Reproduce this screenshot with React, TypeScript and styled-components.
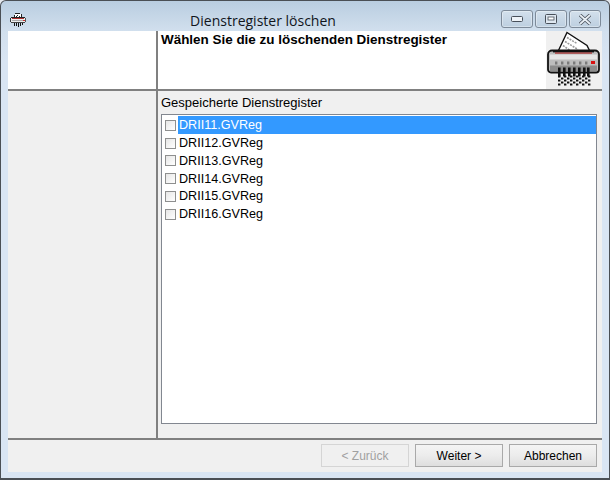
import React from "react";
import styled, { createGlobalStyle } from "styled-components";

const Global = createGlobalStyle`
  html, body { margin: 0; padding: 0; background: #e4e8ee; }
  #root { width: 610px; height: 480px; }
`;

const Frame = styled.div`
  width: 610px;
  height: 480px;
  box-sizing: border-box;
  border: 1px solid #4a4f55;
  border-bottom-width: 2px;
  border-radius: 6px 6px 0 0;
  background: linear-gradient(180deg, #b9cde0 0, #d2e0ee 31px, #d9e5f3 60px, #d9e5f3 100%);
  display: flex;
  flex-direction: column;
  padding: 0 7px 6px;
  overflow: hidden;
  font-family: "Liberation Sans", Arial, sans-serif;
`;

const TitleBar = styled.div`
  height: 30px;
  flex: none;
  display: flex;
  align-items: flex-start;
  margin-right: 1px;
`;

const TitleIcon = styled.div`
  width: 16px;
  height: 15px;
  margin: 11px 0 0 2px;
  flex: none;
`;

const TitleText = styled.div`
  width: 474px;
  margin-top: 10px;
  text-align: center;
  font: 14px/20px "Open Sans", sans-serif;
  color: #10151c;
  flex: none;
  box-sizing: border-box;
`;

const Controls = styled.div`
  display: flex;
  gap: 2px;
  margin-top: 9px;
  margin-left: auto;
`;

const ControlBtn = styled.div`
  width: 32px;
  height: 18px;
  box-sizing: border-box;
  border: 1px solid #7d8a99;
  border-radius: 3px;
  background: linear-gradient(180deg, #d3e0ec, #bdcfe0);
  box-shadow: inset 0 0 0 1px rgba(255, 255, 255, 0.35);
  display: flex;
  align-items: center;
  justify-content: center;
`;

const Client = styled.div`
  flex: 1;
  background: #f0f0f0;
  display: flex;
  flex-direction: column;
  min-height: 0;
`;

const Header = styled.div`
  height: 58px;
  flex: none;
  display: flex;
  background: #fff;
`;

const HeaderLeft = styled.div`
  width: 148px;
  flex: none;
`;

const VRule = styled.div`
  width: 2px;
  flex: none;
  background: #808080;
`;

const HeaderText = styled.div`
  flex: 1;
  padding: 1px 0 0 3px;
  font-size: 13.45px;
  line-height: 16px;
  font-weight: 700;
  color: #000;
`;

const HeaderIcon = styled.div`
  width: 56px;
  flex: none;
  background: #f0f0f0;
`;

const HRule = styled.div`
  height: 2px;
  flex: none;
  background: #808080;
`;

const Body = styled.div`
  flex: 1;
  display: flex;
  min-height: 0;
`;

const Side = styled.div`
  width: 148px;
  flex: none;
`;

const Main = styled.div`
  flex: 1;
  display: flex;
  flex-direction: column;
  padding: 4px 5px 14px 3px;
  min-width: 0;
`;

const ListLabel = styled.div`
  font-size: 13px;
  line-height: 15px;
  height: 19px;
  color: #000;
`;

const ListBox = styled.div`
  flex: 1;
  box-sizing: border-box;
  border: 1px solid #828790;
  background: #fff;
  padding: 1.4px 0 0;
`;

const Row = styled.div`
  height: 17.8px;
  display: flex;
  align-items: center;
  padding-left: 3px;
`;

const Check = styled.div`
  width: 11px;
  height: 11px;
  box-sizing: border-box;
  border: 1px solid #8e8f8f;
  background: linear-gradient(135deg, #e6e6e6, #fff);
  flex: none;
  margin-right: 2px;
`;

const RowLabel = styled.div<{ $selected?: boolean }>`
  flex: 1;
  height: 18px;
  line-height: 18px;
  font-size: 12.6px;
  padding-left: 1px;
  background: ${(p) => (p.$selected ? "#3399ff" : "transparent")};
  color: ${(p) => (p.$selected ? "#fff" : "#000")};
`;

const Footer = styled.div`
  height: 32px;
  flex: none;
  display: flex;
  justify-content: flex-end;
  gap: 6px;
  padding: 4px 5px 0 0;
  box-sizing: border-box;
`;

const Button = styled.div<{ $disabled?: boolean }>`
  width: 88px;
  height: 23px;
  box-sizing: border-box;
  border: 1px solid ${(p) => (p.$disabled ? "#d5d5d5" : "#a9a9a9")};
  background: ${(p) => (p.$disabled ? "#f0f0f0" : "linear-gradient(180deg, #f4f4f4 0, #ececec 50%, #dedede 100%)")};
  color: ${(p) => (p.$disabled ? "#a0a0a0" : "#000")};
  font-size: 12px;
  line-height: 22px;
  text-align: center;
`;

function Shredder() {
  const shreds: React.ReactNode[] = [];
  for (let y = 0; y < 5; y++) {
    for (let x = 0; x < 11; x++) {
      if ((x + y) % 2 === 0) {
        shreds.push(<rect key={`${x}-${y}`} x={12 + x * 3} y={44 + y * 2} width="2.4" height="2" fill="#111" />);
      }
    }
  }
  return (
    <svg width="100%" height="100%" viewBox="0 0 56 57" style={{ display: "block" }}>
      <polygon points="21,1 41,14 44,20 12,20" fill="#fff" stroke="#111" strokeWidth="1.4" />
      <path d="M21 6l10 6M19 10l13 8M17 14l7 5" stroke="#9a9a9a" strokeWidth="1.6" strokeDasharray="2 1" />
      <path d="M6 19h43a4 4 0 0 1 4 4v15a3 3 0 0 1-3 3H5a3 3 0 0 1-3-3V23a4 4 0 0 1 4-4z" fill="#bdbdbd" stroke="#111" strokeWidth="1.8" />
      <rect x="7" y="18.5" width="41" height="2.4" fill="#111" />
      <rect x="9" y="21" width="37" height="1.1" fill="#a82020" />
      <rect x="4" y="23" width="47" height="5" fill="#e6e6e6" />
      <rect x="4" y="34" width="47" height="6" fill="#8c8c8c" />
      {[9, 15, 21, 27, 33, 39].map((x) => (
        <rect key={x} x={x} y="30" width="2.4" height="3" fill="#7a7a7a" />
      ))}
      <rect x="45" y="29.5" width="4" height="3" fill="#d81010" />
      {[12, 17, 22, 27, 32, 37, 41].map((x) => (
        <rect key={x} x={x} y="36" width="2.6" height="9" fill="#111" />
      ))}
      {shreds}
    </svg>
  );
}

function SmallShredder() {
  return (
    <svg width="16" height="15" viewBox="0 0 16 15" shapeRendering="crispEdges" style={{ display: "block" }}>
      <path d="M5 1h5v1h1v1h1v2H4V3h1z" fill="#fff" />
      <path d="M5 1h5v1H5zM4 3h1v2H4zM11 2h1v3h-1zM7 3h1v1H7zM9 4h1v1H9zM6 4h1v1H6z" fill="#222" />
      <rect x="1" y="5" width="14" height="1" fill="#222" />
      <rect x="0" y="6" width="1" height="4" fill="#333" />
      <rect x="15" y="6" width="1" height="4" fill="#555" />
      <rect x="1" y="6" width="14" height="4" fill="#eeeeee" />
      <rect x="2" y="6" width="12" height="1" fill="#b03030" />
      <rect x="2" y="8" width="12" height="1" fill="#aaaaaa" />
      <rect x="1" y="10" width="14" height="1" fill="#444" />
      <rect x="13" y="8" width="2" height="1" fill="#c83030" />
      <path d="M4 11h1v3H4zM6 11h1v3H6zM8 11h1v4H8zM10 11h1v3h-1zM12 11h1v2h-1z" fill="#111" />
    </svg>
  );
}

const files = ["DRII11", "DRII12", "DRII13", "DRII14", "DRII15", "DRII16"];

export default function App() {
  return (
    <>
      <Global />
      <Frame>
        <TitleBar>
          <TitleIcon>
            <SmallShredder />
          </TitleIcon>
          <TitleText>Dienstregister löschen</TitleText>
          <Controls>
            <ControlBtn>
              <svg width="12" height="6" viewBox="0 0 12 6">
                <rect x="0.5" y="0.5" width="11" height="5" rx="1" fill="#eef3f8" stroke="#48505a" />
              </svg>
            </ControlBtn>
            <ControlBtn>
              <svg width="12" height="10" viewBox="0 0 12 10">
                <rect x="0.5" y="0.5" width="11" height="9" rx="1" fill="#dfe8f1" stroke="#48505a" />
                <rect x="3" y="3" width="6" height="3" fill="#fff" stroke="#48505a" strokeWidth="0.8" />
              </svg>
            </ControlBtn>
            <ControlBtn>
              <svg width="14" height="11" viewBox="0 0 14 11">
                <path d="M2 1l10 9M12 1L2 10" stroke="#48505a" strokeWidth="3.4" />
                <path d="M2 1l10 9M12 1L2 10" stroke="#e8eef4" strokeWidth="1.8" />
              </svg>
            </ControlBtn>
          </Controls>
        </TitleBar>
        <Client>
          <Header>
            <HeaderLeft />
            <VRule />
            <HeaderText>Wählen Sie die zu löschenden Dienstregister</HeaderText>
            <HeaderIcon>
              <Shredder />
            </HeaderIcon>
          </Header>
          <HRule />
          <Body>
            <Side />
            <VRule />
            <Main>
              <ListLabel>Gespeicherte Dienstregister</ListLabel>
              <ListBox>
                {files.map((f, i) => (
                  <Row key={f}>
                    <Check />
                    <RowLabel $selected={i === 0}>{f}.GVReg</RowLabel>
                  </Row>
                ))}
              </ListBox>
            </Main>
          </Body>
          <HRule />
          <Footer>
            <Button $disabled>&lt; Zurück</Button>
            <Button>Weiter &gt;</Button>
            <Button>Abbrechen</Button>
          </Footer>
        </Client>
      </Frame>
    </>
  );
}
